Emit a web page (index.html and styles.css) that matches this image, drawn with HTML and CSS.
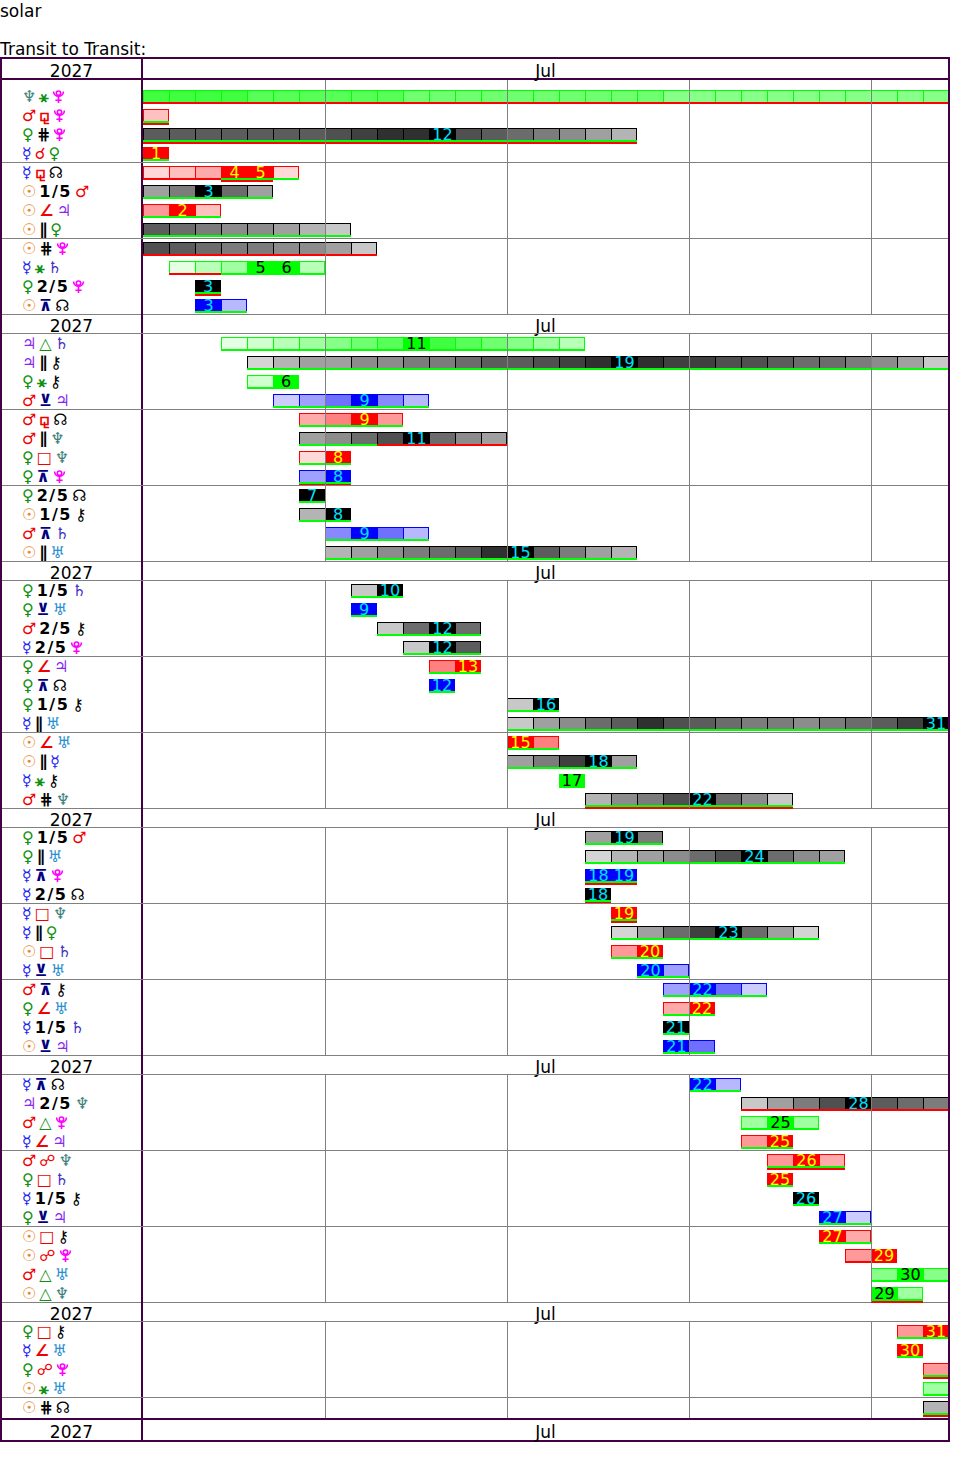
FILE: index.html
```html
<!DOCTYPE html>
<html>
<head>
<meta charset="utf-8">
<title>solar</title>
<link rel="stylesheet" href="styles.css">
</head>
<body>
<div class="intro">solar<br><br>Transit to Transit:</div>
<div class="chart" id="chart"></div>
<script src="app.js"></script>
</body>
</html>
```

FILE: styles.css
```css
body { margin: 0; font-family: "DejaVu Sans", Verdana, sans-serif; color: #000; background: #fff; }
.intro { font-size: 17px; line-height: 18.8px; padding-top: 2px; margin-bottom: -1px; }
.chart { width: 950px; box-sizing: border-box; border: 2px solid #440044; }

.hdr { display: grid; grid-template-columns: 139px 807px; font-size: 17px; text-align: center; }
.hdr .yr, .hdr .mo { height: 18px; line-height: 22px; overflow: visible; }
.hdr .mo { border-left: 2px solid #440044; }
.hdr.mid { border-top: 1px solid #808080; }
.hdr.top { border-bottom: 2px solid #440044; }
.hdr.top .yr, .hdr.top .mo { height: 19px; line-height: 25px; }
.hdr.foot { border-top: 2px solid #440044; }
.hdr.foot .yr, .hdr.foot .mo { height: 20px; line-height: 25px; }

.grp {
  position: relative;
  border-top: 1px solid #808080;
  background: linear-gradient(#440044, #440044) 139px 0 / 2px 100% no-repeat;
}
.grp.first { border-top: 0; padding-top: 7px; }
.grp.last { padding-bottom: 1px; }
.grp::after {
  content: "";
  position: absolute;
  top: 0; bottom: 0; left: 141px; width: 805px;
  pointer-events: none;
  background-image: linear-gradient(#808080, #808080), linear-gradient(#808080, #808080),
                    linear-gradient(#808080, #808080), linear-gradient(#808080, #808080);
  background-size: 1px 100%;
  background-repeat: no-repeat;
  background-position: 182px 0, 364px 0, 546px 0, 728px 0;
}
.row { display: grid; grid-template-columns: 139px 807px; height: 19px; }
.grp .row:nth-child(4) { height: 18px; }

.lbl { padding-left: 20px; font-size: 16px; line-height: 19px; white-space: nowrap; font-weight: bold; }
.lbl span { margin-right: 3px; }
.lbl .pg { display: inline-block; width: 13px; height: 13px; vertical-align: -1px; margin-right: 3px; }
.p-su { color: #e5862a; }
.p-me { color: #2020f0; }
.p-ve { color: #109010; }
.p-ma { color: #f00000; }
.p-ju { color: #8a2af0; }
.p-sa { color: #4030c8; }
.p-ur { color: #2a8fcf; }
.p-ne { color: #3d7f7a; }
.p-pl { color: #ff00ff; }
.p-no { color: #000; }
.p-ch { color: #000; }
.a-sx, .a-tr { color: #109010; }
.a-sq, .a-ss, .a-sqq, .a-cj, .a-op { color: #f00000; }
.a-pa, .a-cp { color: #000; }
.a-q, .a-bq { color: #000; letter-spacing: 1.5px; }
.a-qx, .a-sse { color: #000080; }

.tl {
  border-left: 2px solid #440044;
  display: grid;
  grid-template-columns: repeat(31, 26px);
  align-items: start;
  padding-top: 3px;
  overflow: hidden;
}
.bar { display: flex; }
.c {
  display: block;
  box-sizing: border-box;
  width: 26px;
  height: 12px;
  border-style: solid;
  border-width: 1px 0 0 1px;
  font: 16px/11px "DejaVu Sans", Verdana, sans-serif;
  font-style: normal;
  text-align: center;
  white-space: nowrap;
}
.c:last-child { border-right-width: 1px; }

.ug { box-shadow: 0 2px 0 #00ff00; }
.ur { box-shadow: 0 2px 0 #ff0000; }
.ub { box-shadow: 0 2px 0 #00ff00, 0 4px 0 #ff0000; }

.k .c { border-color: #000; }
.k .x { background: #000; color: #00e0ff; }
.k .s1 { background: #303030; }
.k .s2 { background: #404040; }
.k .s3 { background: #505050; }
.k .s4 { background: #5c5c5c; }
.k .s5 { background: #6c6c6c; }
.k .s6 { background: #7c7c7c; }
.k .s7 { background: #8c8c8c; }
.k .s8 { background: #a0a0a0; }
.k .s9 { background: #b4b4b4; }
.k .sa { background: #c8c8c8; }
.k .sb { background: #d4d4d4; }

.r .c { border-color: #ff0000; }
.r .x { background: #ff0000; color: #ffff00; }
.r .s1 { background: #ff5858; }
.r .s2 { background: #ff8080; }
.r .s3 { background: #ff9898; }
.r .s4 { background: #ffaaaa; }
.r .s5 { background: #ffc0c0; }
.r .s6 { background: #ffd8d8; }

.b .c { border-color: #0000ff; }
.b .x { background: #0000ff; color: #00e0ff; }
.b .s1 { background: #4040ff; }
.b .s2 { background: #5858ff; }
.b .s3 { background: #7070ff; }
.b .s4 { background: #8888ff; }
.b .s5 { background: #a0a0ff; }
.b .s6 { background: #b8b8ff; }
.b .s7 { background: #ccccff; }

.n .c { border-color: #00ff00; }
.n .x { background: #00ff00; color: #000; }
.n .s1 { background: #40ff40; }
.n .s2 { background: #58ff58; }
.n .s3 { background: #70ff70; }
.n .s4 { background: #88ff88; }
.n .s5 { background: #a0ffa0; }
.n .s6 { background: #b8ffb8; }
.n .s7 { background: #d0ffd0; }
.n .s8 { background: #e4ffe4; }
```

FILE: app.js
```js
var P = {su:'\u2609', me:'\u263F', ve:'\u2640', ma:'\u2642', ju:'\u2643', sa:'\u2644',
         ur:'\u2645', ne:'\u2646', no:'\u260A', ch:'\u26B7'};
var A = {cj:'\u260C', op:'\u260D', tr:'\u25B3', sq:'\u25A1', sx:'\u26B9', ss:'\u2220',
         sqq:'\u26BC', pa:'\u2225', cp:'\u22D5', q:'1/5', bq:'2/5', qx:'\u22BC', sse:'\u22BB'};

var PLUTO = '<svg class="pg p-pl" viewBox="0 0 13 13" aria-label="Pluto">' +
  '<g fill="none" stroke="currentColor" stroke-width="1.6">' +
  '<circle cx="6.5" cy="3.2" r="2.2"/>' +
  '<path d="M1.6 1.4 A4.9 4.9 0 0 0 11.4 1.4"/>' +
  '<path d="M6.5 6.3 V13 M3.4 10.3 H9.6"/></g></svg>';

var R = [
 ['ne','sx','pl',1,'n','1111222222333333333344444444444','r'],
 ['ma','sqq','pl',1,'r','5','b'],
 ['ve','cp','pl',1,'k','4444444321103456789','b'],
 ['me','cj','ve',1,'r','0','g'],
 ['me','sqq','no',1,'r','654006','rrrbbg'],
 ['su','q','ma',1,'k','86058','g'],
 ['su','ss','ju',1,'r','305','g'],
 ['su','pa','ve',1,'k','4567789a','g'],
 ['su','cp','pl',1,'k','34566778a','r'],
 ['me','sx','sa',2,'n','865006','rrgggg'],
 ['ve','bq','pl',3,'k','0','b'],
 ['su','qx','no',3,'b','06','g'],
 ['ju','tr','sa',4,'n','87654320123456','g'],
 ['ju','pa','ch',5,'k','b9887766544321012233455678a','g'],
 ['ve','sx','ch',5,'n','70','g'],
 ['ma','sse','ju',6,'b','753046','g'],
 ['ma','sqq','no',7,'r','4203','g'],
 ['ma','pa','ne',7,'k','87530578','gggrrrrr'],
 ['ve','sq','ne',7,'r','60','g'],
 ['ve','qx','pl',7,'b','50','b'],
 ['ve','bq','no',7,'k','0','g'],
 ['su','q','ch',7,'k','90','g'],
 ['ma','qx','sa',8,'b','4036','g'],
 ['su','pa','ur',8,'k','987654104689','g'],
 ['ve','q','sa',9,'k','a0','g'],
 ['ve','sse','ur',9,'b','0','g'],
 ['ma','bq','ch',10,'k','a505','g'],
 ['me','bq','pl',11,'k','a04','g'],
 ['ve','ss','ju',12,'r','20','g'],
 ['ve','qx','no',12,'b','0','g'],
 ['ve','q','ch',15,'k','a0','g'],
 ['me','pa','ur',15,'k','a8754134566765420','g'],
 ['su','ss','ur',15,'r','02','g'],
 ['su','pa','me',15,'k','86208','g'],
 ['me','sx','ch',17,'n','0','g'],
 ['ma','cp','ne',18,'k','9763057a','b'],
 ['ve','q','ma',18,'k','806','g'],
 ['ve','pa','ur',18,'k','b987530578','g'],
 ['me','qx','pl',18,'b','00','b'],
 ['me','bq','no',18,'k','0','b'],
 ['me','sq','ne',19,'r','0','b'],
 ['me','pa','ve',19,'k','b852058b','g'],
 ['su','sq','sa',19,'r','30','g'],
 ['me','sse','ur',20,'b','05','g'],
 ['ma','qx','ch',21,'b','5037','g'],
 ['ve','ss','ur',21,'r','40','g'],
 ['me','q','sa',21,'k','0','g'],
 ['su','sse','ju',21,'b','03','g'],
 ['me','qx','no',22,'b','06','g'],
 ['ju','bq','ne',24,'k','a8630456','r'],
 ['ma','tr','pl',24,'n','505','g'],
 ['me','ss','ju',24,'r','30','g'],
 ['ma','op','ne',25,'r','304','b'],
 ['ve','sq','sa',25,'r','0','g'],
 ['me','q','ch',26,'k','0','g'],
 ['ve','sse','ju',27,'b','07','g'],
 ['su','sq','ch',27,'r','04','g'],
 ['su','op','pl',28,'r','30','r'],
 ['ma','tr','ur',29,'n','404','g'],
 ['su','tr','ne',29,'n','05','b'],
 ['ve','sq','ch',30,'r','30','g'],
 ['me','ss','ur',30,'r','0','g'],
 ['ve','op','pl',31,'r','3','b'],
 ['su','sx','ur',31,'n','5','g'],
 ['su','cp','no',31,'k','9','b']
];

function planet(k) {
  if (k === 'pl') return PLUTO;
  return '<span class="p-' + k + '">' + P[k] + '</span>';
}

function label(r) {
  return '<div class="lbl">' + planet(r[0]) +
    '<span class="a-' + r[1] + '">' + A[r[1]] + '</span>' +
    planet(r[2]) + '</div>';
}

function bar(r) {
  var s = r[3], t = r[4], lv = r[5], ul = r[6], h = '';
  for (var i = 0; i < lv.length; i++) {
    var u = ul.length > 1 ? ul.charAt(i) : ul;
    var l = lv.charAt(i);
    var ex = (l === '0');
    h += '<i class="c ' + (ex ? 'x' : 's' + l) + ' u' + u + '">' + (ex ? (s + i) : '') + '</i>';
  }
  return '<div class="tl"><div class="bar ' + t + '" style="grid-column:' + s + ' / span ' + lv.length + '">' + h + '</div></div>';
}

function header(cls) {
  return '<div class="hdr ' + cls + '"><div class="yr">2027</div><div class="mo">Jul</div></div>';
}

var html = header('top');
var ng = Math.ceil(R.length / 4);
for (var g = 0; g < ng; g++) {
  if (g > 0 && g % 3 === 0) html += header('mid');
  var cls = 'grp' + (g === 0 ? ' first' : '') + (g === ng - 1 ? ' last' : '');
  html += '<div class="' + cls + '">';
  for (var j = g * 4; j < Math.min(R.length, g * 4 + 4); j++) {
    html += '<div class="row">' + label(R[j]) + bar(R[j]) + '</div>';
  }
  html += '</div>';
}
html += header('foot');
document.getElementById('chart').innerHTML = html;
```
